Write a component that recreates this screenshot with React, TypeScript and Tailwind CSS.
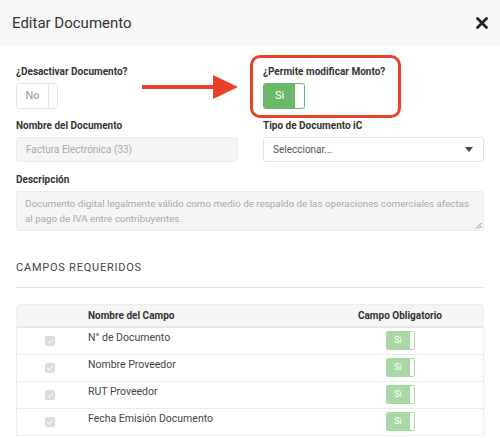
import { Fragment } from "react"

const campos = ["N° de Documento", "Nombre Proveedor", "RUT Proveedor", "Fecha Emisión Documento"]

function Toggle({ label, on, faded }: { label: string; on: boolean; faded?: boolean }) {
  if (!on) {
    return (
      <div className="flex h-[26px] w-[42px] rounded-[3px] border border-[#e4e4e4] bg-white">
        <div className="flex flex-1 items-center justify-center text-[11px] text-[#999]">{label}</div>
        <div className="w-[9px] border-l border-[#e4e4e4]" />
      </div>
    )
  }
  return (
    <div
      className={
        faded
          ? "flex h-[19px] w-[29px] rounded-[2px] border border-[#a9d8a4] bg-white"
          : "flex h-[26px] w-[42px] rounded-[3px] border border-[#6cb86a] bg-white"
      }
    >
      <div
        className={
          faded
            ? "flex flex-1 items-center justify-center bg-[#a9d8a4] text-[9px] text-white"
            : "flex flex-1 items-center justify-center bg-[#6cb86a] text-[11px] text-white"
        }
      >
        {label}
      </div>
      <div className={faded ? "w-[4px]" : "w-[9px]"} />
    </div>
  )
}

function Check() {
  return (
    <div className="flex h-[10px] w-[10px] items-center justify-center rounded-[2px] bg-[#dcdcdc]">
      <svg width="8" height="8" viewBox="0 0 8 8">
        <path d="M1.3 4.2 L3.2 6 L6.8 2" fill="none" stroke="#f4f4f4" strokeWidth="1.3" />
      </svg>
    </div>
  )
}

export default function App() {
  return (
    <div className="relative h-[438px] w-[500px] overflow-hidden bg-white font-['Roboto',sans-serif] text-[#333]">
      {/* header */}
      <div className="flex h-[46px] items-center justify-between bg-[#f7f7f7] pl-[12px] pr-[12px]">
        <h1 className="text-[15px] font-normal text-[#333]">Editar Documento</h1>
        <svg width="12" height="12" viewBox="0 0 12 12">
          <path d="M1.5 1.5 L10.5 10.5 M10.5 1.5 L1.5 10.5" stroke="#222" strokeWidth="2.8" strokeLinecap="round" />
        </svg>
      </div>

      <div className="px-[16px] pt-[17px]">
        <div className="grid grid-cols-[222px_221px] gap-x-[25px]">
          <div>
            <label className="mb-[2px] block text-[10px] font-bold leading-[18px]">¿Desactivar Documento?</label>
            <Toggle label="No" on={false} />
          </div>
          <div>
            <label className="mb-[2px] block text-[10px] font-bold leading-[18px]">¿Permite modificar Monto?</label>
            <Toggle label="Si" on />
          </div>

          <div className="mt-[8px]">
            <label className="mb-[2px] block text-[10px] font-bold leading-[18px]">Nombre del Documento</label>
            <div className="flex h-[25px] items-center rounded-[3px] border border-[#ececec] bg-[#f5f5f5] px-[9px] text-[10px] text-[#aaa]">
              Factura Electrónica (33)
            </div>
          </div>
          <div className="mt-[8px]">
            <label className="mb-[2px] block text-[10px] font-bold leading-[18px]">Tipo de Documento iC</label>
            <div className="flex h-[25px] items-center justify-between rounded-[3px] border border-[#e2e2e2] bg-white pl-[9px] pr-[10px] text-[10px] text-[#555]">
              <span>Seleccionar...</span>
              <svg width="8" height="5" viewBox="0 0 8 5">
                <path d="M0 0 H8 L4 5 Z" fill="#444" />
              </svg>
            </div>
          </div>
        </div>

        <div className="mt-[9px]">
          <label className="mb-[2px] block text-[10px] font-bold leading-[18px]">Descripción</label>
          <div className="relative h-[40px] rounded-[3px] border border-[#ececec] bg-[#f5f5f5] pl-[8px] pr-[12px] pt-[4px] text-[9.8px] leading-[15px] text-[#aaa]">
            Documento digital legalmente válido como medio de respaldo de las operaciones comerciales afectas al pago de IVA entre contribuyentes.
            <svg className="absolute bottom-[1px] right-[1px]" width="7" height="7" viewBox="0 0 7 7">
              <path d="M6.5 1 L1 6.5 M6.5 4 L4 6.5" stroke="#777" strokeWidth="0.9" />
            </svg>
          </div>
        </div>

        <div className="mt-[29px] text-[11px] tracking-[0.07em] text-[#444]">CAMPOS REQUERIDOS</div>
        <div className="mt-[10px] border-t border-[#e5e5e5]" />

        <div className="mt-[16px] overflow-hidden rounded-t-[4px] border border-[#eeeeee]">
          <div className="grid h-[23px] grid-cols-[71px_1fr_166px] items-center border-b-2 border-[#e7e7e7] bg-[#f5f5f5] text-[10px] font-bold">
            <div />
            <div>Nombre del Campo</div>
            <div className="text-center">Campo Obligatorio</div>
          </div>
          {campos.map((c, i) => (
            <Fragment key={c}>
              <div
                className={
                  i === 0
                    ? "grid h-[26px] grid-cols-[71px_1fr_166px] items-center text-[10.5px] text-[#444]"
                    : "grid h-[27px] grid-cols-[71px_1fr_166px] items-center border-t border-[#ececec] text-[10.5px] text-[#444]"
                }
              >
                <div className="flex pl-[28px]">
                  <Check />
                </div>
                <div className="-mt-[5px]">{c}</div>
                <div className="flex justify-center">
                  <Toggle label="Si" on faded />
                </div>
              </div>
            </Fragment>
          ))}
        </div>
      </div>

      {/* annotation: arrow + highlight box */}
      <svg className="absolute left-[140px] top-[74px]" width="100" height="26" viewBox="0 0 100 26">
        <rect x="2" y="11" width="76" height="4" fill="#e8402a" />
        <path d="M73 1 L98 13 L73 25 Z" fill="#e8402a" />
      </svg>
      <div className="absolute left-[250px] top-[55px] h-[63px] w-[151px] rounded-[10px] border-[3px] border-[#e8402a]" />
    </div>
  )
}
